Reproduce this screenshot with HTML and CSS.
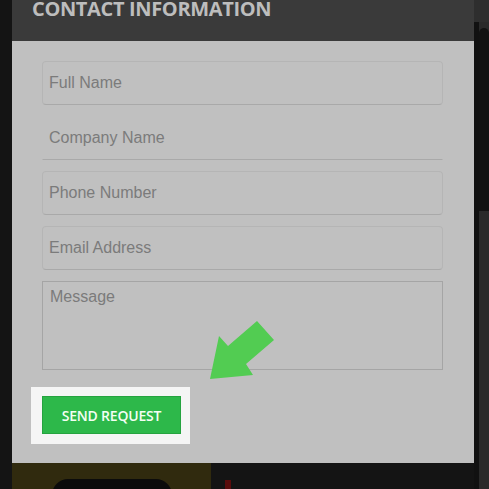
FILE: index.html
```html
<!DOCTYPE html>
<html>
<head>
<meta charset="utf-8">
<link rel="stylesheet" href="styles.css">
</head>
<body>
<div class="page">
  <div class="gutter"></div>
  <div class="main">
    <div class="modal">
      <div class="modal-head"><h2 class="title">CONTACT INFORMATION</h2></div>
      <form class="modal-body">
        <input class="field" type="text" placeholder="Full Name">
        <input class="field field-line" type="text" placeholder="Company Name">
        <input class="field" type="text" placeholder="Phone Number">
        <input class="field" type="text" placeholder="Email Address">
        <textarea class="message" placeholder="Message"></textarea>
        <div class="highlight">
          <button class="send" type="button">SEND REQUEST</button>
        </div>
        <svg class="arrow" width="80" height="70" viewBox="0 0 80 70">
          <polygon points="11,58 20,15 29,25 58,0 75,19 47,43 54,54" fill="#52cc52"/>
        </svg>
      </form>
    </div>
    <div class="under">
      <div class="promo"><div class="promo-btn"></div></div>
      <div class="article"><div class="redbar"></div></div>
    </div>
  </div>
  <div class="side">
    <div class="side-top"></div>
    <div class="side-rest">
      <div class="side-gap"></div>
      <div class="scrollbar"><div class="thumb"></div></div>
    </div>
  </div>
</div>
</body>
</html>
```
FILE: styles.css
```css
* { box-sizing: border-box; }
html, body { margin: 0; padding: 0; }
body { background: #141414; width: 489px; height: 489px; overflow: hidden; }
.page { display: flex; height: 489px; overflow: hidden; }
.gutter { width: 12px; background: #141414; }
.main { width: 462px; display: flex; flex-direction: column; overflow: hidden; }
.modal { width: 462px; flex: none; }
.modal-head { height: 41px; background: #3a3a3a; padding-left: 20px; overflow: hidden; }
.title { margin: 0; font-family: "Open Sans", sans-serif; font-weight: 700; font-size: 20px; line-height: 18px; color: #bdbdbd; letter-spacing: -0.35px; white-space: nowrap; }
.modal-body { position: relative; background: #c0c0c0; height: 422px; padding: 20px 31px 0 30px; display: flex; flex-direction: column; margin: 0; }
.field { display: block; width: 401px; height: 44px; margin: 0 0 11px; padding: 0 7px 0 6px; border: 1px solid #b5b5b5; border-bottom-color: #a9a9a9; border-radius: 4px; background: #c0c0c0; font-family: "Liberation Sans", Arial, sans-serif; font-size: 16px; color: #7b7b7b; outline: none; }
.field-line { border-color: transparent; border-bottom-color: #a9a9a9; border-radius: 0; }
.field::placeholder, .message::placeholder { color: #7b7b7b; opacity: 1; }
.message { display: block; width: 401px; height: 89px; margin: 0; padding: 6px 7px; border: 1px solid #a5a5a5; border-radius: 0; background: #c0c0c0; font-family: "Liberation Sans", Arial, sans-serif; font-size: 16px; line-height: 18px; color: #7b7b7b; resize: none; outline: none; }
.highlight { align-self: flex-start; margin: 17px 0 0 -11px; padding: 9px 9px 10px 11px; background: #f5f5f5; }
.send { display: block; width: 139px; height: 38px; padding: 0; border: 1px solid #25a33f; background: #2db84a; color: #f4fff4; font-family: "Open Sans", sans-serif; font-size: 14px; font-weight: 600; letter-spacing: -0.2px; cursor: pointer; }
.arrow { position: absolute; left: 187px; top: 280px; }
.under { flex: 1; display: flex; overflow: hidden; }
.promo { width: 199px; background: #302a0e; padding: 16px 0 0 40px; }
.promo-btn { width: 120px; height: 40px; background: #0b0b0b; border-radius: 16px; }
.article { flex: 1; background: #141414; padding: 17px 0 0 14px; }
.redbar { width: 6px; height: 20px; background: #5a0c0c; }
.side { width: 15px; display: flex; flex-direction: column; }
.side-top { height: 22px; background: #2e2e2e; }
.side-rest { flex: 1; display: flex; }
.side-gap { width: 5px; background: #111111; }
.scrollbar { width: 10px; background: #2a2a2a; display: flex; flex-direction: column; }
.thumb { height: 183px; background: #121212; border-radius: 5px 5px 0 0; margin-top: 6px; }
```
